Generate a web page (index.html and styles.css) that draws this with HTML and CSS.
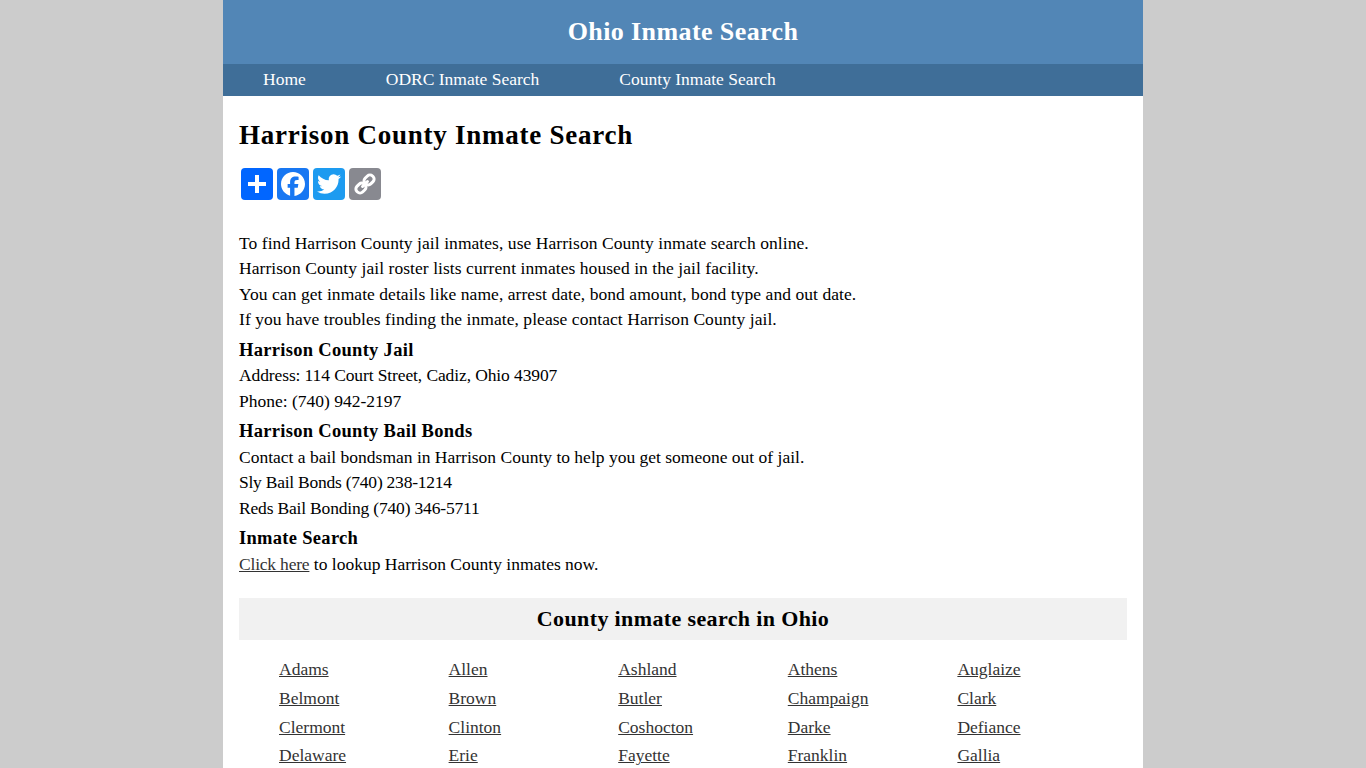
FILE: index.html
```html
<!DOCTYPE html>
<html lang="en">
<head>
<meta charset="utf-8">
<title>Harrison County Inmate Search</title>
<link rel="stylesheet" href="styles.css">
</head>
<body>
<div class="page">
  <header class="site-header">Ohio Inmate Search</header>
  <nav class="nav">
    <a href="#">Home</a>
    <a href="#">ODRC Inmate Search</a>
    <a href="#">County Inmate Search</a>
  </nav>
  <main class="content">
    <h1>Harrison County Inmate Search</h1>
    <div class="share">
      <a class="btn blue" href="#"><svg viewBox="0 0 32 32"><path fill="#fff" d="M14 7h4v7h7v4h-7v7h-4v-7H7v-4h7z"/></svg></a>
      <a class="btn fb" href="#"><svg viewBox="0 0 32 32"><path fill="#fff" d="M28 16c0-6.627-5.373-12-12-12S4 9.373 4 16c0 5.628 3.875 10.35 9.101 11.647v-7.98h-2.474V16H13.1v-1.58c0-4.085 1.849-5.978 5.859-5.978.76 0 2.072.15 2.608.298v3.325c-.283-.03-.775-.045-1.386-.045-1.967 0-2.728.745-2.728 2.683V16h3.92l-.673 3.667h-3.247v8.245C23.395 27.195 28 22.135 28 16"/></svg></a>
      <a class="btn tw" href="#"><svg viewBox="0 0 32 32"><path fill="#fff" d="M28 8.557a10 10 0 0 1-2.828.775 4.93 4.93 0 0 0 2.166-2.725 9.7 9.7 0 0 1-3.13 1.194 4.92 4.92 0 0 0-3.593-1.55 4.924 4.924 0 0 0-4.794 6.049c-4.09-.21-7.72-2.17-10.15-5.15a4.94 4.94 0 0 0-.665 2.477c0 1.71.87 3.214 2.19 4.1a5 5 0 0 1-2.23-.616v.06c0 2.39 1.7 4.38 3.952 4.83-.414.115-.85.174-1.297.174q-.476-.001-.928-.086a4.935 4.935 0 0 0 4.6 3.42 9.9 9.9 0 0 1-6.114 2.107q-.597 0-1.175-.068a13.95 13.95 0 0 0 7.55 2.213c9.056 0 14.01-7.507 14.01-14.013q0-.32-.015-.637c.96-.695 1.795-1.56 2.455-2.55z"/></svg></a>
      <a class="btn gray" href="#"><svg viewBox="0 0 32 32"><g fill="none" stroke="#fff" stroke-width="3" transform="rotate(-45 16 16)"><rect x="5" y="12" width="10.500" height="8" rx="3.600"/><rect x="16.500" y="12" width="10.500" height="8" rx="3.600"/><path stroke-linecap="round" d="M12.500 16h7"/></g></svg></a>
    </div>
    <p class="block intro">To find Harrison County jail inmates, use Harrison County inmate search online.<br>Harrison County jail roster lists current inmates housed in the jail facility.<br>You can get inmate details like name, arrest date, bond amount, bond type and out date.<br>If you have troubles finding the inmate, please contact Harrison County jail.</p>
    <p class="block"><b>Harrison County Jail</b><br><span class="tight-sm">Address: 114 Court Street, Cadiz, Ohio 43907</span><br>Phone: (740) 942-2197</p>
    <p class="block"><b>Harrison County Bail Bonds</b><br>Contact a bail bondsman in Harrison County to help you get someone out of jail.<br><span class="tight-lg">Sly Bail Bonds (740) 238-1214</span><br><span class="tight">Reds Bail Bonding (740) 346-5711</span></p>
    <p class="block"><b>Inmate Search</b><br><a class="more" href="#">Click here</a> to lookup Harrison County inmates now.</p>
    <h2>County inmate search in Ohio</h2>
    <ul class="counties">
      <li><a href="#">Adams</a></li><li><a href="#">Allen</a></li><li><a href="#">Ashland</a></li><li><a href="#">Athens</a></li><li><a href="#">Auglaize</a></li>
      <li><a href="#">Belmont</a></li><li><a href="#">Brown</a></li><li><a href="#">Butler</a></li><li><a href="#">Champaign</a></li><li><a href="#">Clark</a></li>
      <li><a href="#">Clermont</a></li><li><a href="#">Clinton</a></li><li><a href="#">Coshocton</a></li><li><a href="#">Darke</a></li><li><a href="#">Defiance</a></li>
      <li><a href="#">Delaware</a></li><li><a href="#">Erie</a></li><li><a href="#">Fayette</a></li><li><a href="#">Franklin</a></li><li><a href="#">Gallia</a></li>
    </ul>
  </main>
</div>
</body>
</html>
```
FILE: styles.css
```css
html, body { margin: 0; padding: 0; height: 768px; overflow: hidden; }
body { background: #ccc; font-family: "Liberation Serif", "Times New Roman", serif; font-size: 17.5px; color: #000; }
.page { width: 920px; margin: 0 auto; background: #fff; height: 768px; overflow: hidden; }
.site-header { background: #5286b6; color: #fff; height: 64px; line-height: 64px; text-align: center; font-size: 26px; font-weight: bold; letter-spacing: .4px; }
.nav { background: #3f6e98; height: 32px; display: flex; padding-left: 40px; gap: 80px; line-height: 31px; }
.nav a { color: #fff; text-decoration: none; }
.content { padding: 0 16px; }
h1 { font-size: 27px; margin: 24px 0 0; line-height: 31px; letter-spacing: .75px; }
.share { display: flex; gap: 4px; margin: 17px 0 0 2px; }
.btn { width: 32px; height: 32px; border-radius: 4px; display: block; }
.btn svg { display: block; width: 32px; height: 32px; }
.blue { background: #0166ff; }
.fb { background: #1877f2; }
.tw { background: #1d9bf0; }
.gray { background: #888990; }
.block { margin: 0 0 5px; line-height: 25.5px; }
.block b { font-size: 18.5px; letter-spacing: .3px; }
.intro { letter-spacing: .06px; }
.tight { letter-spacing: -.18px; }
.tight-sm { letter-spacing: -.11px; }
.tight-lg { letter-spacing: -.24px; }
.more { letter-spacing: -.2px; }
.share + .block { margin-top: 30.6px; }
.block a, .counties a { color: #333; }
h2 { background: #f1f1f1; font-size: 22px; text-align: center; margin: 21px 0 0; height: 42px; line-height: 41px; letter-spacing: .37px; }
.counties { list-style: none; margin: 15px 0 0; padding: 0 0 0 40px; display: grid; grid-template-columns: repeat(5, 169.6px); grid-auto-rows: 28.8px; line-height: 28px; }
```
